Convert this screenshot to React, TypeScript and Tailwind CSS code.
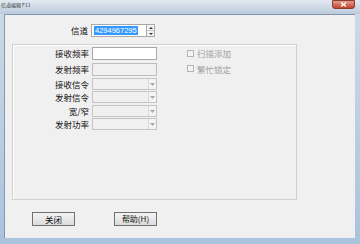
import React from "react";

const cjk = { fontFamily: '"Noto Sans CJK SC", "Noto Sans", sans-serif' };

function Combo() {
  return (
    <div className="flex h-[12px] w-[65px] border border-[#c4c4c4] bg-[#f0f0f0]">
      <div className="flex-1" />
      <div className="flex w-[8px] items-center justify-center border-l border-[#d8d8d8] bg-[#f4f4f4]">
        <svg width="5" height="3" viewBox="0 0 5 3">
          <path d="M0 0 L5 0 L2.5 3 Z" fill="#a8a8a8" />
        </svg>
      </div>
    </div>
  );
}

function Row({ label, children, mt }: { label: string; children: React.ReactNode; mt: string }) {
  return (
    <div className={`flex items-center ${mt}`}>
      <div className="w-[79px] shrink-0 pr-[3px] text-right text-[8.5px] leading-none text-[#111]">{label}</div>
      {children}
    </div>
  );
}

export default function App() {
  return (
    <div
      className="flex h-[244px] w-[360px] flex-col bg-gradient-to-b from-[#cfdae6] to-[#a9c3de]"
      style={cjk}
    >
      <div className="flex h-[14px] shrink-0 items-start justify-between bg-gradient-to-b from-[#e2e9f1] to-[#bccbdc]">
        <div className="pl-[1px] pt-[2px] text-[5px] leading-none text-[#333]">信道编辑 F11</div>
        <div className="mr-[5px] flex h-[9px] w-[23px] items-center justify-center rounded-b-[3px] border border-[#8b3b30] bg-gradient-to-b from-[#e49a8c] to-[#c2412c]">
          <svg width="7" height="5" viewBox="0 0 7 5">
            <path d="M1 0.5 L6 4.5 M6 0.5 L1 4.5" stroke="#fff" strokeWidth="1.3" />
          </svg>
        </div>
      </div>
      <div className="ml-[4px] mr-[5px] mb-[6px] flex flex-1 flex-col border-l border-t border-[#8396ad] bg-[#f0f0f0]">
        <div className="mt-[9px] flex items-center">
          <div className="w-[86px] shrink-0 pr-[3px] text-right text-[8.5px] leading-none text-[#111]">信道</div>
          <div className="flex h-[13px] w-[56px] items-center border border-[#a9a9a9] bg-white pl-[2px]">
            <span
              className="bg-[#3399ff] px-[1px] text-[7.5px] leading-[9px] text-white"
              style={{ fontFamily: '"Liberation Sans", Arial, sans-serif' }}
            >
              4294967295
            </span>
          </div>
          <div className="flex h-[13px] w-[8px] flex-col border border-l-0 border-[#a9a9a9]">
            <div className="flex flex-1 items-center justify-center border-b border-[#c8c8c8] bg-[#f2f2f2]">
              <svg width="4" height="2" viewBox="0 0 4 2">
                <path d="M0 2 L4 2 L2 0 Z" fill="#333" />
              </svg>
            </div>
            <div className="flex flex-1 items-center justify-center bg-[#f2f2f2]">
              <svg width="4" height="2" viewBox="0 0 4 2">
                <path d="M0 0 L4 0 L2 2 Z" fill="#333" />
              </svg>
            </div>
          </div>
        </div>
        <div className="ml-[7px] mt-[7px] flex h-[156px] w-[285px] border border-[#d0d0d0] shadow-[inset_1px_1px_0_#ffffff]">
          <div className="flex flex-col pt-[2px]">
            <Row label="接收频率" mt="mt-0">
              <div className="h-[13px] w-[65px] border border-[#a9a9a9] bg-white" />
            </Row>
            <Row label="发射频率" mt="mt-[3px]">
              <div className="h-[13px] w-[65px] border border-[#bdbdbd] bg-[#f0f0f0]" />
            </Row>
            <Row label="接收信令" mt="mt-[2px]">
              <Combo />
            </Row>
            <Row label="发射信令" mt="mt-[1px]">
              <Combo />
            </Row>
            <Row label="宽/窄" mt="mt-[2px]">
              <Combo />
            </Row>
            <Row label="发射功率" mt="mt-[1px]">
              <Combo />
            </Row>
          </div>
          <div className="ml-[30px] flex flex-col pt-[4px] text-[8.5px] leading-none text-[#a0a0a0]">
            <div className="flex items-center">
              <div className="mr-[3px] h-[7px] w-[7px] border border-[#b5b5b5] bg-[#f4f4f4]" />
              <span>扫描添加</span>
            </div>
            <div className="mt-[7px] flex items-center">
              <div className="mr-[3px] h-[7px] w-[7px] border border-[#b5b5b5] bg-[#f4f4f4]" />
              <span>繁忙锁定</span>
            </div>
          </div>
        </div>
        <div className="ml-[27px] mt-[12px] flex gap-[39px]">
          <div className="flex h-[14px] w-[43px] items-center justify-center border border-[#707070] bg-gradient-to-b from-[#f4f4f4] to-[#dcdcdc] text-[8.5px] leading-none text-[#111]">
            关闭
          </div>
          <div className="flex h-[14px] w-[43px] items-center justify-center border border-[#707070] bg-gradient-to-b from-[#f4f4f4] to-[#dcdcdc] text-[8px] leading-none text-[#111]">
            帮助(H)
          </div>
        </div>
      </div>
    </div>
  );
}
